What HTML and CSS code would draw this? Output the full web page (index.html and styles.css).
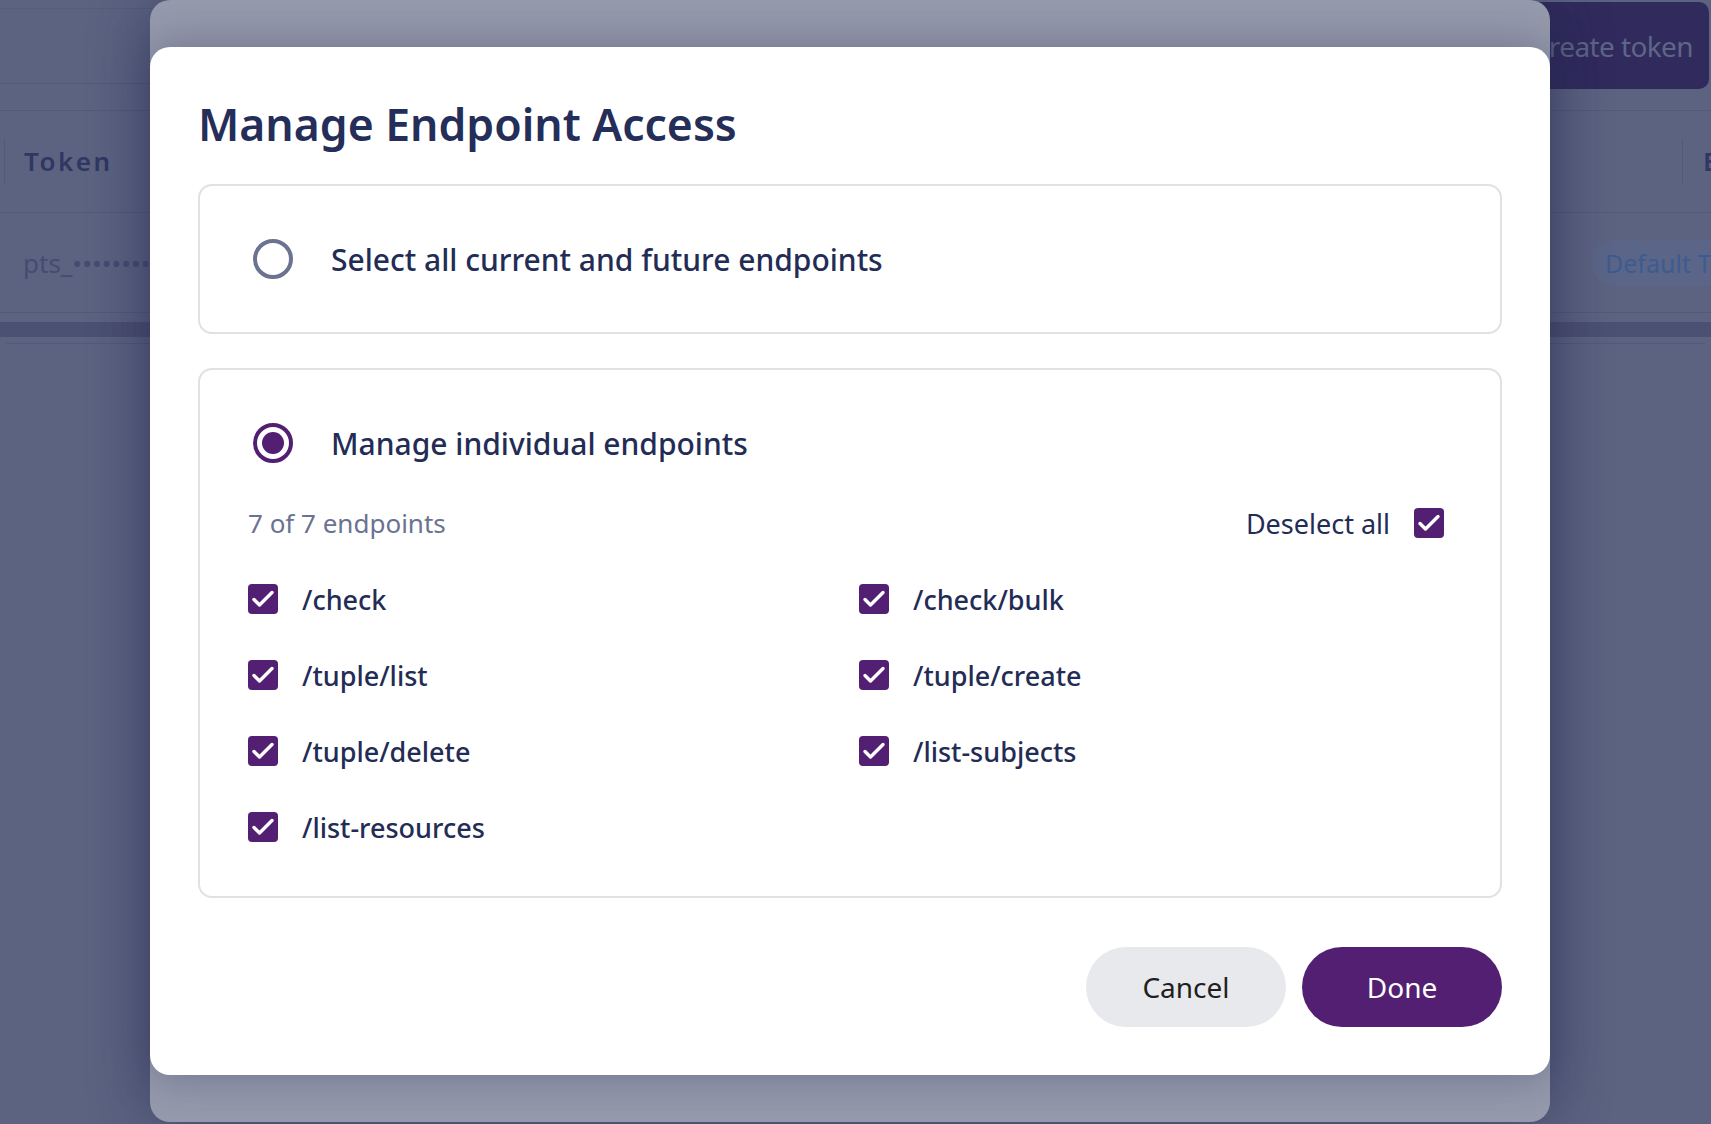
FILE: index.html
```html
<!DOCTYPE html>
<html lang="en">
<head>
    <meta charset="UTF-8">
    <meta name="viewport" content="width=device-width, initial-scale=1.0">
    <title>Manage Endpoint Access</title>
    <link rel="stylesheet" href="styles.css">
</head>
<body>
    <div class="page">
        <div class="toolbar">
            <div class="toolbar-fill"></div>
            <button class="create-btn" type="button">Create token</button>
        </div>
        <div class="table">
            <div class="table-head">
                <div class="cell cell-token">Token</div>
                <div class="cell cell-type">Endpoints</div>
            </div>
            <div class="table-row">
                <div class="cell cell-token">pts_••••••••••••••••</div>
                <div class="cell cell-type"><span class="badge">Default Token</span></div>
            </div>
        </div>
        <div class="scrollbar"></div>
    </div>

    <div class="dialog-back"></div>

    <div class="dialog">
        <h2 class="dialog-title">Manage Endpoint Access</h2>

        <div class="option-card">
            <label class="option">
                <span class="radio"></span>
                <span>Select all current and future endpoints</span>
            </label>
        </div>

        <div class="option-card">
            <label class="option">
                <span class="radio checked"></span>
                <span>Manage individual endpoints</span>
            </label>
            <div class="list-head">
                <span class="count">7 of 7 endpoints</span>
                <label class="select-all">
                    <span>Deselect all</span>
                    <span class="checkbox"><svg viewBox="0 0 30 30"><path d="M6 15.5l5.5 5.5L24 8.5"/></svg></span>
                </label>
            </div>
            <div class="endpoints">
                <label class="endpoint"><span class="checkbox"><svg viewBox="0 0 30 30"><path d="M6 15.5l5.5 5.5L24 8.5"/></svg></span>/check</label>
                <label class="endpoint"><span class="checkbox"><svg viewBox="0 0 30 30"><path d="M6 15.5l5.5 5.5L24 8.5"/></svg></span>/check/bulk</label>
                <label class="endpoint"><span class="checkbox"><svg viewBox="0 0 30 30"><path d="M6 15.5l5.5 5.5L24 8.5"/></svg></span>/tuple/list</label>
                <label class="endpoint"><span class="checkbox"><svg viewBox="0 0 30 30"><path d="M6 15.5l5.5 5.5L24 8.5"/></svg></span>/tuple/create</label>
                <label class="endpoint"><span class="checkbox"><svg viewBox="0 0 30 30"><path d="M6 15.5l5.5 5.5L24 8.5"/></svg></span>/tuple/delete</label>
                <label class="endpoint"><span class="checkbox"><svg viewBox="0 0 30 30"><path d="M6 15.5l5.5 5.5L24 8.5"/></svg></span>/list-subjects</label>
                <label class="endpoint"><span class="checkbox"><svg viewBox="0 0 30 30"><path d="M6 15.5l5.5 5.5L24 8.5"/></svg></span>/list-resources</label>
            </div>
        </div>

        <div class="dialog-footer">
            <button class="btn btn-cancel" type="button">Cancel</button>
            <button class="btn btn-done" type="button">Done</button>
        </div>
    </div>
</body>
</html>
```

FILE: styles.css
```css
body {
    margin: 0;
    width: 1711px;
    height: 1124px;
    overflow: hidden;
    position: relative;
    background: #5c6381;
    font-family: "Noto Sans", "Open Sans", sans-serif;
    color: #232c55;
}

/* page behind the dialogs (already dimmed) */
.page {
    padding-top: 2px;
}
.toolbar {
    display: flex;
    align-items: flex-start;
    height: 108px;
}
.toolbar-fill {
    flex: 1;
    margin-top: 6px;
    height: 74px;
    border-top: 1px solid #565c7b;
    border-bottom: 1px solid #535a79;
}
.create-btn {
    height: 87px;
    margin-right: 2px;
    padding: 0 16px 0 60px;
    background: #302b5c;
    border: none;
    border-radius: 0 10px 10px 0;
    color: #5f6588;
    font-family: inherit;
    font-size: 28px;
    letter-spacing: -0.6px;
}
.table {
    border-top: 1px solid #535a79;
}
.table-head, .table-row {
    display: flex;
    justify-content: space-between;
    align-items: center;
    border-bottom: 1px solid #535a79;
}
.table-head {
    height: 101px;
}
.table-row {
    height: 99px;
}
.cell-token {
    padding-left: 23px;
}
.table-head .cell {
    font-size: 26px;
    font-weight: 600;
    letter-spacing: 2.5px;
    color: #2f3762;
}
.table-head .cell-type {
    width: 8px;
    white-space: nowrap;
    border-left: 1px solid #535a79;
    padding-left: 20px;
    height: 45px;
    line-height: 45px;
}
.table-head .cell-token {
    border-left: 1px solid #535a79;
    margin-left: 4px;
    padding-left: 19px;
    height: 45px;
    line-height: 45px;
}
.table-row .cell {
    font-size: 26px;
    color: #454c71;
}
.table-row .cell-type {
    width: 120px;
    white-space: nowrap;
}
.badge {
    display: inline-block;
    padding: 6px 14px;
    border-radius: 26px;
    background: #5a6587;
    color: #3e5b91;
    font-size: 25px;
}
.scrollbar {
    margin-top: 9px;
    height: 15px;
    background: #4b5172;
    border-bottom: 6px solid #5c6381;
    box-shadow: 0 7px 0 -6px #535a79;
}

/* stacked dialogs */
.dialog-back {
    position: absolute;
    left: 150px;
    top: 0;
    width: 1400px;
    height: 1122px;
    border-radius: 20px;
    background: #959aac;
    box-shadow: 0 0 60px rgba(30, 34, 70, 0.45);
}
.dialog {
    position: absolute;
    left: 150px;
    top: 47px;
    width: 1400px;
    box-sizing: border-box;
    padding: 50px 48px 48px;
    display: flex;
    flex-direction: column;
    gap: 34px;
    background: white;
    border-radius: 20px;
    box-shadow: 0 0 46px rgba(40, 45, 85, 0.38);
}
.dialog-title {
    margin: 0;
    font-size: 44.5px;
    line-height: 53px;
    font-weight: 600;
    color: #252e59;
}
.option-card {
    border: 2px solid #e1e1e3;
    border-radius: 14px;
    padding: 48px;
    display: flex;
    flex-direction: column;
    gap: 34px;
}
.option {
    display: flex;
    align-items: center;
    gap: 33px;
    height: 50px;
    font-size: 30px;
    font-weight: 500;
    color: #232c55;
}
.radio {
    width: 40px;
    height: 40px;
    margin: 5px;
    box-sizing: border-box;
    border: 4px solid #6c7391;
    border-radius: 50%;
    display: flex;
    align-items: center;
    justify-content: center;
}
.radio.checked {
    border-color: #521f73;
}
.radio.checked::after {
    content: "";
    width: 22px;
    height: 22px;
    border-radius: 50%;
    background: #521f73;
}
.list-head {
    display: flex;
    justify-content: space-between;
    align-items: center;
    height: 42px;
    font-size: 27px;
}
.count {
    font-size: 26px;
    color: #6b7291;
}
.select-all {
    display: flex;
    align-items: center;
    gap: 24px;
    margin-right: 8px;
    color: #232c55;
}
.checkbox {
    width: 30px;
    height: 30px;
    border-radius: 4px;
    background: #521f73;
    flex-shrink: 0;
}
.checkbox svg {
    display: block;
    width: 30px;
    height: 30px;
    fill: none;
    stroke: white;
    stroke-width: 3.4;
    stroke-linecap: round;
    stroke-linejoin: round;
}
.endpoints {
    display: grid;
    grid-template-columns: 1fr 1fr;
    column-gap: 18px;
    row-gap: 34px;
}
.endpoint {
    display: flex;
    align-items: center;
    gap: 24px;
    height: 42px;
    font-size: 27px;
    font-weight: 500;
    color: #232c55;
}
.dialog-footer {
    margin-top: 15px;
    display: flex;
    justify-content: flex-end;
    gap: 16px;
}
.btn {
    width: 200px;
    height: 80px;
    border: none;
    border-radius: 40px;
    font-family: inherit;
    font-size: 28px;
    cursor: pointer;
}
.btn-cancel {
    background: #e8e9ed;
    color: #1f1f22;
}
.btn-done {
    background: #521f73;
    color: white;
}
```
